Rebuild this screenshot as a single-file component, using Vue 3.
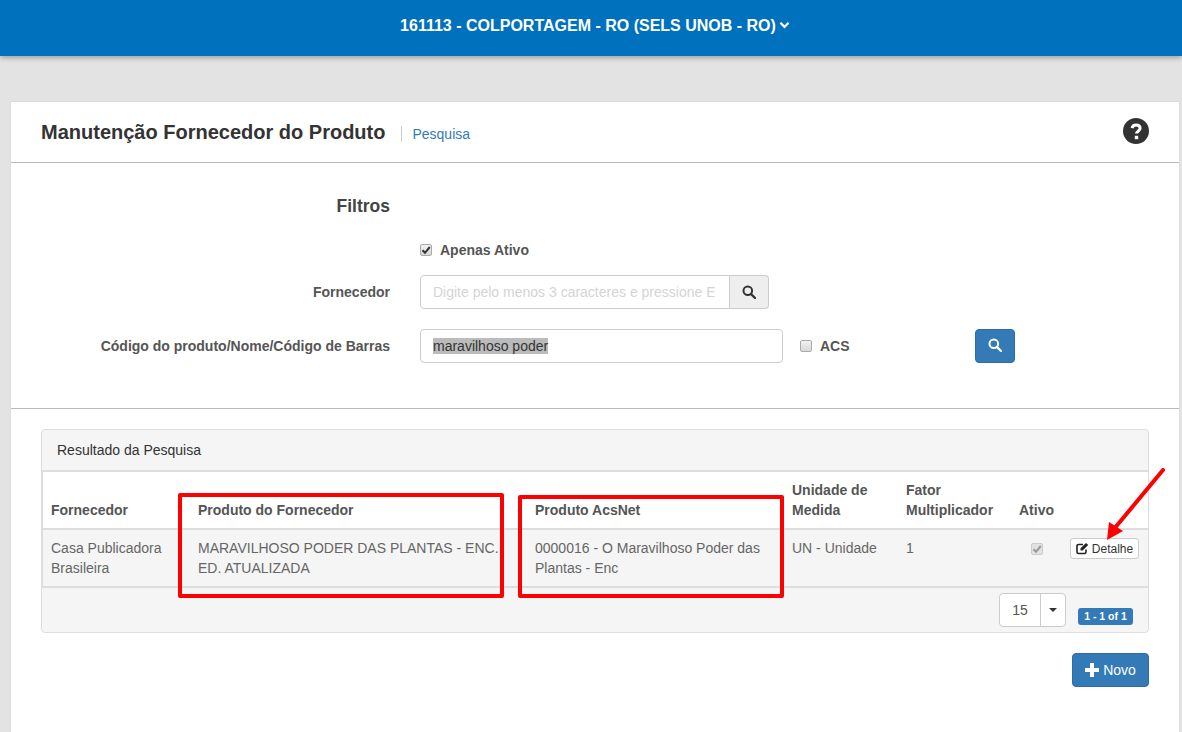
<script setup>
const columns = [
  { label: 'Fornecedor', width: 147 },
  { label: 'Produto do Fornecedor', width: 337 },
  { label: 'Produto AcsNet', width: 257 },
  { label: 'Unidade de Medida', width: 114 },
  { label: 'Fator Multiplicador', width: 113 },
  { label: 'Ativo', width: 51 },
  { label: '', width: 86 }
]
</script>

<template>
  <div class="page">
    <header class="topbar">
      <span>161113 - COLPORTAGEM - RO (SELS UNOB - RO)</span>
      <svg class="chev" viewBox="0 0 12 8" width="11" height="8"><path d="M1.500 1.500 6 6l4.500-4.500" fill="none" stroke="#fff" stroke-width="2.400"/></svg>
    </header>

    <main class="card">
      <div class="card-head">
        <h1>Manutenção Fornecedor do Produto</h1>
        <a class="crumb">Pesquisa</a>
        <svg class="help" viewBox="0 0 26 26" width="26" height="26">
          <circle cx="13" cy="13" r="13" fill="#333"/>
          <path d="M9 10.200c.5-2.200 2-3.200 4.100-3.200 2.300 0 4 1.300 4 3.300 0 2.900-3.600 2.800-3.600 5.200" fill="none" stroke="#fff" stroke-width="3"/>
          <rect x="11.800" y="17.800" width="3.400" height="3.400" fill="#fff"/>
        </svg>
      </div>

      <form class="filters" @submit.prevent>
        <div class="row row-title"><div class="label title">Filtros</div></div>
        <div class="row row-active">
          <div class="label"></div>
          <label class="check-line">
            <span class="box"><svg viewBox="0 0 12 12" width="12" height="12"><path d="M2.500 6.200 5 8.800l4.800-5.800" fill="none" stroke="#333" stroke-width="2"/></svg></span>
            <b>Apenas Ativo</b>
          </label>
        </div>
        <div class="row row-supplier">
          <div class="label">Fornecedor</div>
          <div class="group">
            <input class="ctl" placeholder="Digite pelo menos 3 caracteres e pressione Enter" />
            <button class="addon" type="button">
              <svg viewBox="0 0 14 14" width="14" height="14"><circle cx="5.800" cy="5.800" r="4.300" fill="none" stroke="#333" stroke-width="2"/><path d="m9 9 4 4" stroke="#333" stroke-width="2.400" stroke-linecap="round"/></svg>
            </button>
          </div>
        </div>
        <div class="row row-code">
          <div class="label">Código do produto/Nome/Código de Barras</div>
          <div class="ctl ctl-code"><span class="selected">maravilhoso poder</span></div>
          <label class="check-line acs">
            <span class="box"></span>
            <b>ACS</b>
          </label>
          <button class="btn search" type="button">
            <svg viewBox="0 0 14 14" width="14" height="14"><circle cx="5.800" cy="5.800" r="4.300" fill="none" stroke="#fff" stroke-width="2"/><path d="m9 9 4 4" stroke="#fff" stroke-width="2.400" stroke-linecap="round"/></svg>
          </button>
        </div>
      </form>

      <section class="content">
        <div class="panel">
          <div class="panel-head">Resultado da Pesquisa</div>
          <table>
            <colgroup><col v-for="c in columns" :key="c.label" :style="{ width: c.width + 'px' }" /></colgroup>
            <thead>
              <tr><th v-for="c in columns" :key="c.label">{{ c.label }}</th></tr>
            </thead>
            <tbody>
              <tr>
                <td>Casa Publicadora Brasileira</td>
                <td>MARAVILHOSO PODER DAS PLANTAS - ENC. ED. ATUALIZADA</td>
                <td>0000016 - O Maravilhoso Poder das Plantas - Enc</td>
                <td>UN - Unidade</td>
                <td>1</td>
                <td class="center">
                  <span class="box disabled"><svg viewBox="0 0 12 12" width="12" height="12"><path d="M2.500 6.200 5 8.800l4.800-5.800" fill="none" stroke="#999" stroke-width="2"/></svg></span>
                </td>
                <td class="action">
                  <button class="detail" type="button">
                    <svg viewBox="0 0 13 13" width="13" height="13"><path d="M10 7.500V10a1.500 1.500 0 0 1-1.500 1.500h-6A1.500 1.500 0 0 1 1 10V4a1.500 1.500 0 0 1 1.500-1.500H7" fill="none" stroke="#222" stroke-width="1.600"/><path d="M4.500 8.500V6.300L10 .9l2.200 2.200-5.500 5.400z" fill="#222"/></svg>
                    Detalhe
                  </button>
                </td>
              </tr>
            </tbody>
          </table>
          <div class="panel-foot">
            <div class="pager">
              <span class="pager-val">15</span>
              <span class="pager-caret"><i></i></span>
            </div>
            <span class="badge">1 - 1 of 1</span>
          </div>
        </div>
        <div class="actions">
          <button class="btn novo" type="button">
            <svg viewBox="0 0 14 14" width="14" height="14"><path d="M7 0v14M0 7h14" stroke="#fff" stroke-width="4"/></svg>
            Novo
          </button>
        </div>
      </section>
    </main>

    <div class="mark mark-a"></div>
    <div class="mark mark-b"></div>
    <svg class="arrow" viewBox="0 0 70 80" width="70" height="80">
      <path d="M65 2 16 61" stroke="#f00" stroke-width="4" stroke-linecap="round"/>
      <path d="M9 72 11 54 25 63z" fill="#f00"/>
    </svg>
  </div>
</template>

<style>
html, body { margin: 0; background: #e3e3e3; }
</style>

<style scoped>
.page {
  position: relative;
  height: 732px;
  overflow: hidden;
  background: #e3e3e3;
  font: 14px/20px "Liberation Sans", Arial, sans-serif;
  color: #333;
}
.topbar {
  height: 56px;
  background: #0071bc;
  box-shadow: 0 2px 5px rgba(0, 0, 0, .3);
  color: #fff;
  font-weight: 700;
  font-size: 16px;
  display: flex;
  align-items: center;
  justify-content: center;
  gap: 3px;
  padding: 0 0 5px 8px;
  box-sizing: border-box;
}
.chev { margin-top: -2px; }
.card {
  margin: 45px 0 0 10px;
  width: 1170px;
  height: 640px;
  box-sizing: border-box;
  background: #fff;
  border: 1px solid #ddd;
}
.card-head {
  height: 60px;
  border-bottom: 1px solid #bbb;
  display: flex;
  align-items: center;
  padding: 0 30px;
}
h1 {
  margin: 0;
  font-size: 20px;
  line-height: 28px;
  font-weight: 700;
  color: #333;
}
.crumb {
  margin-left: 16px;
  padding-left: 10px;
  border-left: 1px solid #ccc;
  color: #337ab7;
  line-height: 16px;
  margin-top: 3px;
}
.help { margin-left: auto; margin-top: -3px; }
.filters {
  padding: 31px 0 45px;
  border-bottom: 1px solid #bbb;
}
.row {
  display: flex;
  align-items: center;
}
.label {
  width: 379px;
  flex: none;
  text-align: right;
  font-weight: 700;
  color: #555;
  margin-right: 30px;
}
.label.title { font-size: 17.500px; line-height: 24px; color: #444; }
.row-title { height: 24px; }
.row-active { height: 20px; margin-top: 22px; }
.row-supplier { margin-top: 15px; }
.row-code { margin-top: 20px; }
.check-line {
  display: flex;
  align-items: center;
  gap: 8px;
  color: #555;
}
.box {
  width: 12px;
  height: 12px;
  flex: none;
  display: inline-block;
  box-sizing: border-box;
  border: 1px solid #aaa;
  border-radius: 2px;
  background: linear-gradient(#f2f2f2, #d8d8d8);
  line-height: 0;
}
.box svg { margin: -1px; }
.box.disabled { background: #e2e2e2; border-color: #ccc; }
.group { display: flex; width: 349px; }
.ctl {
  box-sizing: border-box;
  height: 34px;
  border: 1px solid #ccc;
  border-radius: 4px;
  padding: 6px 12px;
  font: inherit;
  color: #555;
  background: #fff;
  outline: none;
}
.group .ctl {
  width: 310px;
  padding-right: 14px;
  border-radius: 4px 0 0 4px;
}
.ctl::placeholder { color: #d4d4d4; opacity: 1; }
.addon {
  width: 39px;
  height: 34px;
  box-sizing: border-box;
  border: 1px solid #ccc;
  border-left: 0;
  border-radius: 0 4px 4px 0;
  background: #eee;
  padding: 0;
  display: flex;
  align-items: center;
  justify-content: center;
}
.ctl-code { width: 363px; flex: none; }
.selected { background: #bbb; color: #333; }
.acs { margin-left: 17px; gap: 8px; width: 175px; flex: none; }
.btn {
  background: #337ab7;
  border: 1px solid #2e6da4;
  border-radius: 4px;
  color: #fff;
  font: inherit;
  height: 34px;
  padding: 0;
  display: flex;
  align-items: center;
  justify-content: center;
}
.search { width: 40px; }
.search svg { margin-top: -2px; }
.content { padding: 20px 30px 0; }
.panel {
  width: 1108px;
  box-sizing: border-box;
  border: 1px solid #ddd;
  border-radius: 4px;
  background: #f5f5f5;
}
.panel-head {
  height: 41px;
  box-sizing: border-box;
  padding: 10px 15px;
  border-bottom: 1px solid #ddd;
  color: #333;
}
table {
  width: 1106px;
  table-layout: fixed;
  border-collapse: separate;
  border-spacing: 0;
  border-top: 1px solid #ddd;
  border-left: 1px solid #ddd;
}
th {
  background: #fff;
  color: #555;
  font-weight: 700;
  text-align: left;
  vertical-align: bottom;
  padding: 8px;
  border-bottom: 2px solid #ddd;
}
td {
  color: #666;
  vertical-align: top;
  padding: 8px;
  border-bottom: 2px solid #ddd;
}
td.center { text-align: center; padding-top: 13px; line-height: 0; }
td.action { padding: 8px 0 0 8px; }
.detail {
  width: 69px;
  height: 21px;
  box-sizing: border-box;
  border: 1px solid #ccc;
  border-radius: 3px;
  background: #fff;
  font: 12px/18px "Liberation Sans", Arial, sans-serif;
  color: #333;
  padding: 0;
  display: flex;
  align-items: center;
  justify-content: center;
  gap: 3px;
}
.panel-foot {
  height: 44px;
  display: flex;
  justify-content: flex-end;
  align-items: flex-start;
  padding: 5px 15px 0 0;
  box-sizing: border-box;
}
.pager {
  width: 67px;
  height: 34px;
  box-sizing: border-box;
  border: 1px solid #ccc;
  border-radius: 4px;
  background: #fff;
  display: flex;
  color: #555;
}
.pager-val { width: 40px; text-align: center; line-height: 32px; border-right: 1px solid #ccc; }
.pager-caret { flex: 1; display: flex; align-items: center; justify-content: center; }
.pager-caret i {
  width: 0; height: 0;
  border-left: 4px solid transparent;
  border-right: 4px solid transparent;
  border-top: 4px solid #333;
}
.badge {
  margin: 15px 0 0 12px;
  width: 55px;
  height: 17px;
  text-align: center;
  background: #337ab7;
  color: #fff;
  border-radius: 3px;
  font-size: 10.500px;
  line-height: 17px;
  font-weight: 700;
}
.actions { display: flex; justify-content: flex-end; margin-top: 20px; width: 1108px; }
.novo { width: 77px; gap: 4px; }
.mark {
  position: absolute;
  box-sizing: border-box;
  border: 4px solid #f00;
  border-radius: 2px;
  pointer-events: none;
}
.mark-a { left: 178px; top: 493px; width: 326px; height: 105px; }
.mark-b { left: 518px; top: 495px; width: 266px; height: 103px; }
.arrow { position: absolute; left: 1098px; top: 468px; pointer-events: none; }
</style>
